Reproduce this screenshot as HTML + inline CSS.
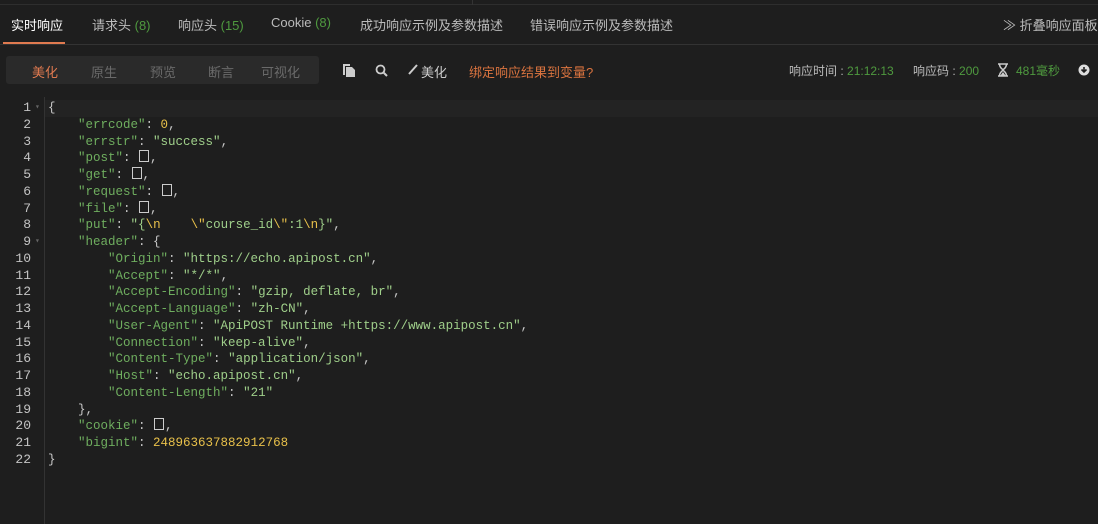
<!DOCTYPE html><html><head><meta charset="utf-8"><style>
body{margin:0;width:1098px;height:524px;background:#1e1e1e;overflow:hidden;font-family:"Liberation Sans","Noto Sans CJK SC",sans-serif;color:#c8c8c8;position:relative}
.top{position:absolute;left:0;top:0;width:1098px;height:4px;border-bottom:1px solid #2e2e2e}
.tabs{position:absolute;top:10px;left:0;width:1098px;height:34px;border-bottom:1px solid #333;font-size:13px}
.tab{position:absolute;top:5px;color:#bbb}
.tab .n{color:#4f9a3f}
.act{color:#fff}
.ul{position:absolute;left:3px;top:32px;width:62px;height:2px;background:#e07a50}
.seg{position:absolute;left:6px;top:56px;width:313px;height:28px;background:#2a2a2a;border-radius:3px;font-size:13px}
.seg span{position:absolute;top:6px;color:#6a6a6a}
.tb{position:absolute;top:62px;font-size:13px}
.code{position:absolute;left:0;top:100px;font-family:"Liberation Mono",monospace;font-size:12.5px;line-height:16.75px}
.ln{position:absolute;left:0;width:31px;text-align:right;color:#c4c4c4;font-size:13px}
.gut{position:absolute;left:44px;top:97px;width:1px;height:427px;background:#333}
.row1{position:absolute;left:45px;top:100px;width:1053px;height:17px;background:#232323}
.l{position:absolute;left:48px;white-space:pre;color:#c8c8c8}
.k{color:#6fae5f}.s{color:#9fcf8a}.y{color:#e8c04a}
.b{display:inline-block;width:8px;height:10px;border:1px solid #ccc;vertical-align:-1px;margin:0 1px}
</style></head><body>
<div class="top"></div><div style="position:absolute;left:472px;top:0;width:1px;height:5px;background:#333"></div>
<div class="tabs">
<span class="tab act" style="left:11px">实时响应</span>
<span class="tab" style="left:92px">请求头 <span class="n">(8)</span></span>
<span class="tab" style="left:178px">响应头 <span class="n">(15)</span></span>
<span class="tab" style="left:271px">Cookie <span class="n">(8)</span></span>
<span class="tab" style="left:360px">成功响应示例及参数描述</span>
<span class="tab" style="left:530px">错误响应示例及参数描述</span>
<span class="tab" style="left:1003px">≫ 折叠响应面板</span>
<div class="ul"></div>
</div>
<div class="seg"><span style="left:26px;color:#e07a50">美化</span><span style="left:85px">原生</span><span style="left:144px">预览</span><span style="left:202px">断言</span><span style="left:255px">可视化</span></div>
<svg style="position:absolute;left:342px;top:63px" width="14" height="14" viewBox="0 0 14 14"><path d="M1 1h7v2H3v9H1z" fill="#ccc"/><path d="M4 4h6l3 3v7H4z" fill="#ccc"/></svg>
<svg style="position:absolute;left:375px;top:64px" width="13" height="13" viewBox="0 0 13 13"><circle cx="5.5" cy="5.5" r="4" fill="none" stroke="#ccc" stroke-width="1.8"/><path d="M8.5 8.5l3.5 3.5" stroke="#ccc" stroke-width="2"/></svg>
<svg style="position:absolute;left:408px;top:63px" width="11" height="12" viewBox="0 0 11 12"><path d="M1 11L9 2" stroke="#ccc" stroke-width="2"/></svg>
<span class="tb" style="left:421px;color:#ccc">美化</span>
<span class="tb" style="left:469px;color:#d9733f">绑定响应结果到变量?</span>
<span class="tb" style="left:789px;color:#bbb;font-size:12px">响应时间 : <span style="color:#4f9a3f">21:12:13</span></span>
<span class="tb" style="left:913px;color:#bbb;font-size:12px">响应码 : <span style="color:#4f9a3f">200</span></span>
<svg style="position:absolute;left:998px;top:63px" width="10" height="14" viewBox="0 0 10 14"><path d="M0 1h10M0 13h10M1.5 1c0 4 3 5 3.5 6c-.5 1-3.5 2-3.5 6M8.5 1c0 4-3 5-3.5 6c.5 1 3.5 2 3.5 6" stroke="#ccc" stroke-width="1.5" fill="none"/><path d="M2.5 12.5L5 9l2.5 3.5z" fill="#ccc"/></svg>
<span class="tb" style="left:1016px;color:#4f9a3f;font-size:12px">481毫秒</span>
<svg style="position:absolute;left:1078px;top:64px" width="12" height="12" viewBox="0 0 12 12"><circle cx="6" cy="6" r="5.5" fill="#ddd"/><path d="M6 3v5M3.5 5.5L6 8l2.5-2.5" stroke="#1e1e1e" stroke-width="1.6" fill="none"/></svg>
<div class="row1"></div><div class="gut"></div>
<div class="code">
<div class="ln" style="top:0">1</div><div class="ln" style="top:16.75px">2</div><div class="ln" style="top:33.5px">3</div><div class="ln" style="top:50.25px">4</div><div class="ln" style="top:67px">5</div><div class="ln" style="top:83.75px">6</div><div class="ln" style="top:100.5px">7</div><div class="ln" style="top:117.25px">8</div><div class="ln" style="top:134px">9</div><div class="ln" style="top:150.75px">10</div><div class="ln" style="top:167.5px">11</div><div class="ln" style="top:184.25px">12</div><div class="ln" style="top:201px">13</div><div class="ln" style="top:217.75px">14</div><div class="ln" style="top:234.5px">15</div><div class="ln" style="top:251.25px">16</div><div class="ln" style="top:268px">17</div><div class="ln" style="top:284.75px">18</div><div class="ln" style="top:301.5px">19</div><div class="ln" style="top:318.25px">20</div><div class="ln" style="top:335px">21</div><div class="ln" style="top:351.75px">22</div>
<div style="position:absolute;left:35px;top:0;font-size:8px;color:#666">▾</div>
<div style="position:absolute;left:35px;top:134px;font-size:8px;color:#666">▾</div>
<div class="l" style="top:0">{</div>
<div class="l" style="top:16.75px">    <span class="k">"errcode"</span>: <span class="y">0</span>,</div>
<div class="l" style="top:33.5px">    <span class="k">"errstr"</span>: <span class="s">"success"</span>,</div>
<div class="l" style="top:50.25px">    <span class="k">"post"</span>: <span class="b"></span>,</div>
<div class="l" style="top:67px">    <span class="k">"get"</span>: <span class="b"></span>,</div>
<div class="l" style="top:83.75px">    <span class="k">"request"</span>: <span class="b"></span>,</div>
<div class="l" style="top:100.5px">    <span class="k">"file"</span>: <span class="b"></span>,</div>
<div class="l" style="top:117.25px">    <span class="k">"put"</span>: <span class="s">"{<span class="y">\n</span>    <span class="y">\"</span>course_id<span class="y">\"</span>:1<span class="y">\n</span>}"</span>,</div>
<div class="l" style="top:134px">    <span class="k">"header"</span>: {</div>
<div class="l" style="top:150.75px">        <span class="k">"Origin"</span>: <span class="s">"https://echo.apipost.cn"</span>,</div>
<div class="l" style="top:167.5px">        <span class="k">"Accept"</span>: <span class="s">"*/*"</span>,</div>
<div class="l" style="top:184.25px">        <span class="k">"Accept-Encoding"</span>: <span class="s">"gzip, deflate, br"</span>,</div>
<div class="l" style="top:201px">        <span class="k">"Accept-Language"</span>: <span class="s">"zh-CN"</span>,</div>
<div class="l" style="top:217.75px">        <span class="k">"User-Agent"</span>: <span class="s">"ApiPOST Runtime +https://www.apipost.cn"</span>,</div>
<div class="l" style="top:234.5px">        <span class="k">"Connection"</span>: <span class="s">"keep-alive"</span>,</div>
<div class="l" style="top:251.25px">        <span class="k">"Content-Type"</span>: <span class="s">"application/json"</span>,</div>
<div class="l" style="top:268px">        <span class="k">"Host"</span>: <span class="s">"echo.apipost.cn"</span>,</div>
<div class="l" style="top:284.75px">        <span class="k">"Content-Length"</span>: <span class="s">"21"</span></div>
<div class="l" style="top:301.5px">    },</div>
<div class="l" style="top:318.25px">    <span class="k">"cookie"</span>: <span class="b"></span>,</div>
<div class="l" style="top:335px">    <span class="k">"bigint"</span>: <span class="y">248963637882912768</span></div>
<div class="l" style="top:351.75px">}</div>
</div>
</body></html>
